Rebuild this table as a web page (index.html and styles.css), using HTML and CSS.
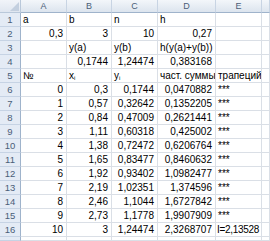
FILE: index.html
```html
<!DOCTYPE html>
<html>
<head>
<meta charset="utf-8">
<link rel="stylesheet" href="styles.css">
</head>
<body>
<div class="sheet">
  <div class="corner"><svg width="10" height="10" viewBox="0 0 10 10"><polygon points="10,1 10,10 1,10" fill="#c3cfdf"/></svg></div>
  <div class="ch">A</div><div class="ch">B</div><div class="ch">C</div><div class="ch">D</div><div class="ch">E</div><div class="ch"></div>

  <div class="rh">1</div><div class="c">a</div><div class="c">b</div><div class="c">n</div><div class="c">h</div><div class="c"></div><div class="c"></div>
  <div class="rh">2</div><div class="c r">0,3</div><div class="c r">3</div><div class="c r">10</div><div class="c r">0,27</div><div class="c"></div><div class="c"></div>
  <div class="rh">3</div><div class="c"></div><div class="c">y(a)</div><div class="c">y(b)</div><div class="c">h(y(a)+y(b))</div><div class="c"></div><div class="c"></div>
  <div class="rh">4</div><div class="c"></div><div class="c r">0,1744</div><div class="c r">1,24474</div><div class="c r">0,383168</div><div class="c"></div><div class="c"></div>
  <div class="rh">5</div><div class="c">№</div><div class="c">x<sub>i</sub></div><div class="c">y<sub>i</sub></div><div class="c">част. суммы</div><div class="c">трапеций</div><div class="c"></div>
  <div class="rh">6</div><div class="c r">0</div><div class="c r">0,3</div><div class="c r">0,1744</div><div class="c r">0,0470882</div><div class="c st">***</div><div class="c"></div>
  <div class="rh">7</div><div class="c r">1</div><div class="c r">0,57</div><div class="c r">0,32642</div><div class="c r">0,1352205</div><div class="c st">***</div><div class="c"></div>
  <div class="rh">8</div><div class="c r">2</div><div class="c r">0,84</div><div class="c r">0,47009</div><div class="c r">0,2621441</div><div class="c st">***</div><div class="c"></div>
  <div class="rh">9</div><div class="c r">3</div><div class="c r">1,11</div><div class="c r">0,60318</div><div class="c r">0,425002</div><div class="c st">***</div><div class="c"></div>
  <div class="rh">10</div><div class="c r">4</div><div class="c r">1,38</div><div class="c r">0,72472</div><div class="c r">0,6206764</div><div class="c st">***</div><div class="c"></div>
  <div class="rh">11</div><div class="c r">5</div><div class="c r">1,65</div><div class="c r">0,83477</div><div class="c r">0,8460632</div><div class="c st">***</div><div class="c"></div>
  <div class="rh">12</div><div class="c r">6</div><div class="c r">1,92</div><div class="c r">0,93402</div><div class="c r">1,0982477</div><div class="c st">***</div><div class="c"></div>
  <div class="rh">13</div><div class="c r">7</div><div class="c r">2,19</div><div class="c r">1,02351</div><div class="c r">1,374596</div><div class="c st">***</div><div class="c"></div>
  <div class="rh">14</div><div class="c r">8</div><div class="c r">2,46</div><div class="c r">1,1044</div><div class="c r">1,6727842</div><div class="c st">***</div><div class="c"></div>
  <div class="rh">15</div><div class="c r">9</div><div class="c r">2,73</div><div class="c r">1,1778</div><div class="c r">1,9907909</div><div class="c st">***</div><div class="c"></div>
  <div class="rh">16</div><div class="c r">10</div><div class="c r">3</div><div class="c r">1,24474</div><div class="c r">2,3268707</div><div class="c ov">I=2,13528</div><div class="c"></div>
  <div class="rh"></div><div class="c"></div><div class="c"></div><div class="c"></div><div class="c"></div><div class="c"></div><div class="c"></div>
</div>
</body>
</html>
```

FILE: styles.css
```css
html, body {
  margin: 0;
  padding: 0;
  background: #ffffff;
}
body {
  width: 270px;
  height: 241px;
  overflow: hidden;
  font-family: "Liberation Sans", Arial, sans-serif;
  font-size: 10px;
  color: #000;
}
.sheet {
  display: grid;
  grid-template-columns: 21px 46px 45px 46px 58px 46px 8px;
  grid-template-rows: 13px repeat(16, 14px) 4px;
  width: 270px;
  overflow: hidden;
}
.corner {
  background: linear-gradient(#f1f4f9, #dfe6f0);
  border-right: 1px solid #b9c8da;
  border-bottom: 1px solid #b9c8da;
  box-sizing: border-box;
  display: flex;
  align-items: flex-end;
  justify-content: flex-end;
  padding: 0 1px 1px 0;
}
.corner svg { display: block; }
.ch {
  background: linear-gradient(#f3f6fa, #dce4ee);
  border-right: 1px solid #c8d4e3;
  border-bottom: 1px solid #9fb3cb;
  box-sizing: border-box;
  color: #4a5e78;
  text-align: center;
  line-height: 12px;
  font-size: 9px;
}
.rh {
  background: #e4ebf5;
  border-right: 1px solid #9fb3cb;
  border-bottom: 1px solid #c6d3e4;
  box-sizing: border-box;
  color: #4a5e78;
  text-align: center;
  line-height: 13px;
  font-size: 9.5px;
}
.c {
  border-right: 1px solid #dadfe6;
  border-bottom: 1px solid #dadfe6;
  box-sizing: border-box;
  line-height: 13px;
  padding: 0 3px 0 2px;
  white-space: nowrap;
  overflow: hidden;
}
.r { text-align: right; }
.st { font-size: 10px; }
.ov {
  overflow: visible;
  position: relative;
  z-index: 1;
  padding-left: 1px;
  letter-spacing: -0.3px;
}
sub {
  font-size: 6px;
  vertical-align: -1px;
  line-height: 0;
}
```
